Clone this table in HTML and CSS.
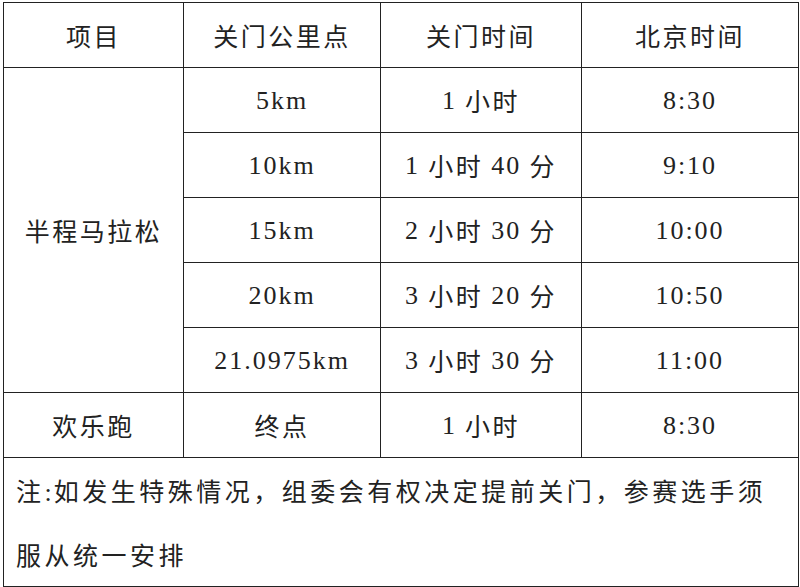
FILE: index.html
```html
<!DOCTYPE html>
<html lang="zh-CN">
<head>
<meta charset="utf-8">
<title>关门时间</title>
<link rel="stylesheet" href="styles.css">
</head>
<body>
<div class="wrap">
<table class="sched">
  <colgroup>
    <col class="c1"><col class="c2"><col class="c3"><col class="c4">
  </colgroup>
  <thead>
    <tr><th>项目</th><th>关门公里点</th><th>关门时间</th><th>北京时间</th></tr>
  </thead>
  <tbody>
    <tr><td rowspan="5">半程马拉松</td><td><span class="num">5km</span></td><td><span class="num">1</span> 小时</td><td><span class="num">8:30</span></td></tr>
    <tr><td><span class="num">10km</span></td><td><span class="num">1</span> 小时 <span class="num">40</span> 分</td><td><span class="num">9:10</span></td></tr>
    <tr><td><span class="num">15km</span></td><td><span class="num">2</span> 小时 <span class="num">30</span> 分</td><td><span class="num">10:00</span></td></tr>
    <tr><td><span class="num">20km</span></td><td><span class="num">3</span> 小时 <span class="num">20</span> 分</td><td><span class="num">10:50</span></td></tr>
    <tr><td><span class="num">21.0975km</span></td><td><span class="num">3</span> 小时 <span class="num">30</span> 分</td><td><span class="num">11:00</span></td></tr>
    <tr><td>欢乐跑</td><td>终点</td><td><span class="num">1</span> 小时</td><td><span class="num">8:30</span></td></tr>
    <tr><td class="note" colspan="4">注<span class="num">:</span>如发生特殊情况，组委会有权决定提前关门，参赛选手须<br>服从统一安排</td></tr>
  </tbody>
</table>
</div>
</body>
</html>
```

FILE: styles.css
```css
html, body {
  margin: 0;
  padding: 0;
  background: #ffffff;
}
.wrap {
  padding: 2px 0 0 3px;
}
.sched {
  border-collapse: collapse;
  table-layout: fixed;
  width: 795px;
  border: 1.5px solid #111;
}
.c1 { width: 180px; }
.c2 { width: 197px; }
.c3 { width: 201px; }
.c4 { width: 217px; }
.sched th,
.sched td {
  border: 1px solid #222;
  height: 64px;
  padding: 0;
  text-align: center;
  vertical-align: middle;
  font-family: "Noto Sans CJK SC", sans-serif;
  font-weight: 400;
  font-size: 25px;
  line-height: 32px;
  letter-spacing: 2.5px;
  color: #222222;
}
.num {
  font-family: "Liberation Serif", serif;
  font-size: 26px;
  line-height: 1;
  letter-spacing: 2px;
  vertical-align: 2px;
}
.sched td.note {
  text-align: left;
  height: 127px;
  padding: 0 0 0 12px;
  line-height: 64px;
  vertical-align: top;
  letter-spacing: 3.5px;
}
.sched td.note .num {
  vertical-align: 0;
}
```
